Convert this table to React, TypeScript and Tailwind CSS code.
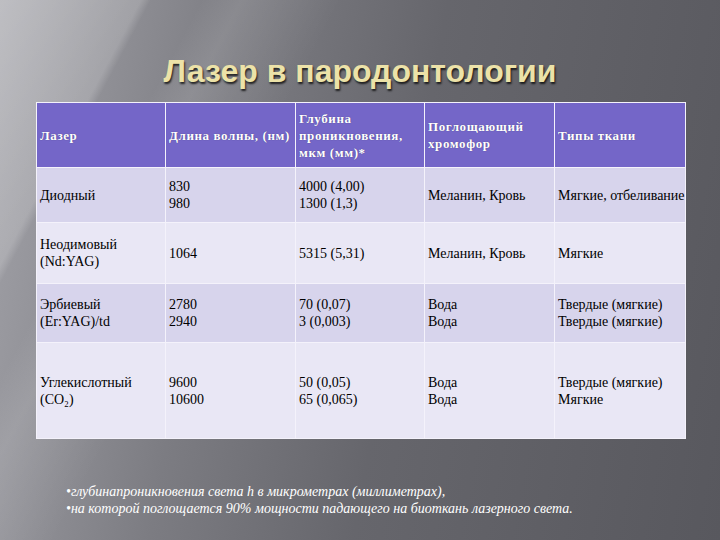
import React from "react";

const rows = [
  { bg: "bg-[#d7d4ec]", h: "h-[55px]", c: [["Диодный"], ["830", "980"], ["4000 (4,00)", "1300 (1,3)"], ["Меланин, Кровь"], ["Мягкие, отбеливание"]] },
  { bg: "bg-[#e9e7f5]", h: "h-[61px]", c: [["Неодимовый", "(Nd:YAG)"], ["1064"], ["5315 (5,31)"], ["Меланин, Кровь"], ["Мягкие"]] },
  { bg: "bg-[#d7d4ec]", h: "h-[59px]", c: [["Эрбиевый", "(Er:YAG)/td"], ["2780", "2940"], ["70 (0,07)", "3 (0,003)"], ["Вода", "Вода"], ["Твердые (мягкие)", "Твердые (мягкие)"]] },
  { bg: "bg-[#e9e7f5]", h: "h-[96px]", c: [["Углекислотный", "(CO₂)"], ["9600", "10600"], ["50 (0,05)", "65 (0,065)"], ["Вода", "Вода"], ["Твердые (мягкие)", "Мягкие"]] },
];

const head = [["Лазер"], ["Длина волны, (нм)"], ["Глубина", "проникновения,", "мкм (мм)*"], ["Поглощающий", "хромофор"], ["Типы ткани"]];

export default function App() {
  return (
    <div className="relative w-[720px] h-[540px] overflow-hidden bg-[linear-gradient(118deg,rgba(255,255,255,0.30)_0%,rgba(255,255,255,0.18)_14%,transparent_15%,transparent_100%),linear-gradient(118deg,transparent_20%,rgba(255,255,255,0.10)_24%,transparent_34%,transparent_100%),linear-gradient(100deg,#a2a2a8_0%,#7c7c82_30%,#66666c_55%,#58585e_100%)]">
      <div className="flex flex-col">
        <div className="h-[100px] flex items-end justify-center pb-[12px]">
          <h1 className="text-[32px] leading-[34px] font-bold text-[#ece2a8] [text-shadow:1px_2px_2px_rgba(0,0,0,0.75)] font-[Liberation_Sans,Arial,sans-serif]">
            Лазер в пародонтологии
          </h1>
        </div>
        <div className="ml-[36px] mt-[2px] w-[649px]">
          <table className="border-collapse w-[649px] table-fixed font-[Liberation_Serif,Times_New_Roman,serif]">
            <colgroup>
              <col className="w-[129px]" />
              <col className="w-[130px]" />
              <col className="w-[129px]" />
              <col className="w-[130px]" />
              <col className="w-[131px]" />
            </colgroup>
            <thead>
              <tr className="h-[65px] bg-[#7466c8]">
                {head.map((c, i) => (
                  <th key={i} className="border-[1.5px] border-[#f4f2fb] text-left align-middle pl-[3px] text-white font-bold text-[13px] leading-[17px] tracking-[0.6px] [text-shadow:0_0_1px_rgba(0,0,0,0.4)]">
                    {c.map((l, j) => (
                      <div key={j} className="whitespace-nowrap font-[Liberation_Serif,Times_New_Roman,serif]">{l}</div>
                    ))}
                  </th>
                ))}
              </tr>
            </thead>
            <tbody>
              {rows.map((r, i) => (
                <tr key={i} className={`${r.h} ${r.bg}`}>
                  {r.c.map((c, j) => (
                    <td key={j} className="border-[1.5px] border-[#f4f2fb] align-middle pl-[3px] text-black text-[14px] leading-[17px]">
                      {c.map((l, k) => (
                        <div key={k} className="whitespace-nowrap font-[Liberation_Serif,Times_New_Roman,serif]">{l}</div>
                      ))}
                    </td>
                  ))}
                </tr>
              ))}
            </tbody>
          </table>
        </div>
        <div className="ml-[66px] mt-[44px] text-white italic text-[14px] leading-[17px] font-[Liberation_Serif,Times_New_Roman,serif]">
          <div>•глубинапроникновения света h в микрометрах (миллиметрах),</div>
          <div>•на которой поглощается 90% мощности падающего на биоткань лазерного света.</div>
        </div>
      </div>
    </div>
  );
}
